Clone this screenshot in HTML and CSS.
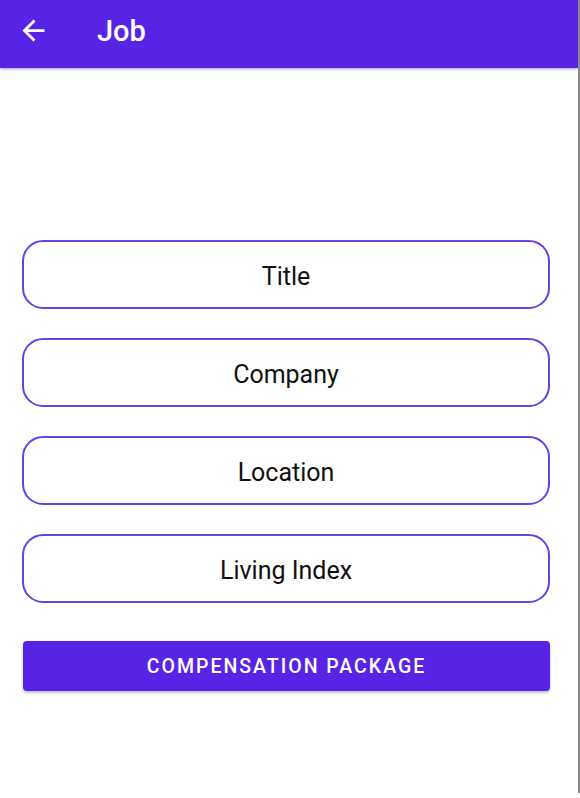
FILE: index.html
```html
<!DOCTYPE html>
<html>
<head>
<meta charset="utf-8">
<link rel="stylesheet" href="styles.css">
</head>
<body>
<div class="screen">
  <header class="appbar">
    <svg class="back" viewBox="0 0 24 24" width="33" height="33"><path d="M20 11H7.83l5.59-5.59L12 4l-8 8 8 8 1.41-1.41L7.83 13H20v-2z" fill="#fff"/></svg>
    <span class="title">Job</span>
  </header>
  <main class="content">
    <div class="field">Title</div>
    <div class="field">Company</div>
    <div class="field">Location</div>
    <div class="field">Living Index</div>
    <button class="btn">COMPENSATION PACKAGE</button>
  </main>
</div>
</body>
</html>
```
FILE: styles.css
```css
html, body { margin: 0; padding: 0; background: #fff; }
.screen {
  width: 578px;
  height: 793px;
  border-right: 2px solid #8a8a8a;
  font-family: Roboto, "Noto Sans", sans-serif;
  overflow: hidden;
}
.appbar {
  height: 68px;
  background: #5724e6;
  display: flex;
  align-items: center;
  box-shadow: 0 1px 3px rgba(60, 20, 160, 0.45);
  position: relative;
}
.back { margin-left: 17px; margin-top: -8px; display: block; }
.title {
  margin-left: 47px;
  margin-top: -7px;
  color: #fff;
  font-size: 29px;
  font-weight: 500;
}
.content {
  padding: 172px 28px 0 22px;
  display: flex;
  flex-direction: column;
  gap: 29px;
}
.field {
  box-sizing: border-box;
  height: 69px;
  border: 2px solid #6a40e4;
  border-radius: 21px;
  display: flex;
  align-items: center;
  justify-content: center;
  font-size: 25px;
  color: #111;
  padding-top: 3px;
}
.btn {
  margin-top: 9px;
  margin-left: 1px;
  height: 50px;
  border: none;
  border-radius: 4px;
  background: #5724e6;
  color: #fff;
  font-family: Roboto, "Noto Sans", sans-serif;
  font-size: 19.5px;
  font-weight: 500;
  letter-spacing: 2px;
  box-shadow: 0 2px 3px rgba(0, 0, 0, 0.25);
}
```
